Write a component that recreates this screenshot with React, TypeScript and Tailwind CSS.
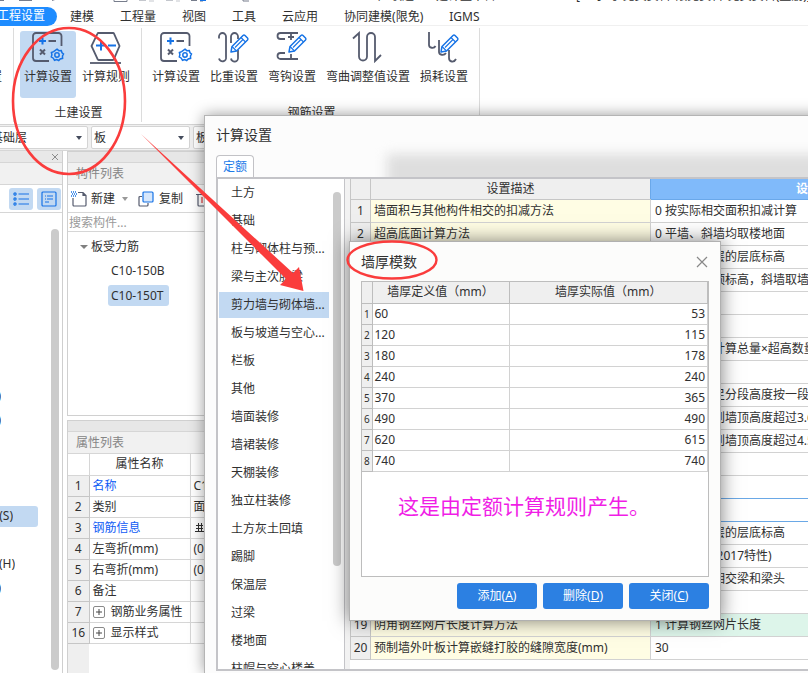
import type { ReactNode } from "react";

const INK = "#555b6e";
const BLUE = "#1673e6";

function Icon({ children }: { children: ReactNode }) {
  return (
    <svg width="34" height="34" viewBox="0 0 34 34" fill="none" stroke={INK} strokeWidth="1.8" aria-hidden="true">
      {children}
    </svg>
  );
}

function Pencil() {
  return (
    <g stroke={BLUE} strokeWidth="1.5" strokeLinejoin="round" fill="#fff">
      <path d="M14 21l1-5.500L26 4.500a1.500 1.500 0 0 1 2 0l2.500 2.500a1.500 1.500 0 0 1 0 2L19.500 20z" />
      <path d="M24 6.500l4.500 4.500M15 15.500l4.500 4.500M18 16.500l8-8" fill="none" strokeWidth="1.100" />
    </g>
  );
}

function CalcSettingIcon() {
  return (
    <Icon>
      <path d="M30.500 15V5a3 3 0 0 0-3-3H5a3 3 0 0 0-3 3v22a3 3 0 0 0 3 3h13" />
      <path d="M8 10h7M11.500 6.500v7" stroke={BLUE} strokeWidth="2" />
      <path d="M17.500 10H25M9 18.500l5 5M14 18.500l-5 5" strokeWidth="2" />
      <g stroke={BLUE} strokeWidth="1.500">
        <path d="M26 18.200l1.800 1.500 2.500-.2.700 2.300 1.500 1.200-1 2 .1 2.300-2.400.6-1.500 1.600-2-.9-2.200.7-1.200-2.100-2-1.200.6-2.200-.5-2.300 2.200-.9z" />
        <circle cx="26" cy="24" r="2.200" />
      </g>
    </Icon>
  );
}

function CalcRuleIcon() {
  return (
    <Icon>
      <path d="M9.500 2h14.500a1 1 0 0 1 1 .6L30.500 15l-5.700 13.300a1 1 0 0 1-1 .7H9.700a1 1 0 0 1-1-.7L2.500 15 8.500 2.600a1 1 0 0 1 1-.6z" />
      <path d="M7 14.500h10M12 9.500v10M19 14.500h8" stroke={BLUE} strokeWidth="2" />
      <path d="M1 32h31" />
    </Icon>
  );
}

function WeightIcon() {
  return (
    <Icon>
      <path d="M2 7.500V5.500a3.500 3.500 0 0 1 7 0V26a3.500 3.500 0 0 1-7 1.500M14 12V5.500a3.500 3.500 0 0 1 7 0V8M21 19v7.500a3.500 3.500 0 0 1-7 1" />
      <Pencil />
    </Icon>
  );
}

function HookIcon() {
  return (
    <Icon>
      <path d="M23 2H5.500a3 3 0 0 0 0 6H10M10 22H5.500a3 3 0 0 0 0 6H23M16 2v7M13 6h6M16 28v-5" />
      <Pencil />
    </Icon>
  );
}

function BendIcon() {
  return (
    <Icon>
      <path d="M2 7.500L8 2v23.500a4 4 0 0 0 8 0V6a4 4 0 0 1 8 0v24l6-6" />
    </Icon>
  );
}

function LossIcon() {
  return (
    <Icon>
      <path d="M2 1v13c0 3 5 4 6.500 1M12 9v12c0 3 5 4 7 1M22 19v8c0 4 5 5 7 1" />
      <Pencil />
    </Icon>
  );
}

function RibbonButton({ label, icon, active = false }: { label: string; icon: ReactNode; active?: boolean }) {
  return (
    <button className={`flex h-[67px] shrink-0 flex-col items-center rounded-[3px] px-1 ${active ? "bg-[#c2d9f2]" : ""}`}>
      {icon}
      <span className="mt-[3px] leading-[18px] whitespace-nowrap">{label}</span>
    </button>
  );
}

function RibbonGroup({ title, children }: { title: string; children: ReactNode }) {
  return (
    <section className="my-[2px] flex shrink-0 flex-col border-r border-[#dcdcdc] pt-[3px] pr-[7px] pl-[6px]">
      <div className="flex gap-[2px]">{children}</div>
      <h2 className="mt-[6px] pl-[3px] text-center leading-[18px]">{title}</h2>
    </section>
  );
}

function Combo({ label, value, className }: { label: string; value: string; className: string }) {
  return (
    <div className={`relative h-[23px] shrink-0 rounded-[2px] border border-[#d4d4d4] bg-white ${className}`}>
      <select aria-label={label} className="h-full w-full appearance-none bg-transparent pl-[2px] outline-none">
        <option>{value}</option>
      </select>
      <span className="pointer-events-none absolute top-[9px] right-[5px] border-x-[3px] border-t-[4px] border-x-transparent border-t-[#444b5c]" />
    </div>
  );
}

const tabs = ["建模", "工程量", "视图", "工具", "云应用", "协同建模(限免)", "IGMS"];

const properties = [
  { no: 1, name: "名称", value: "C10-150T", link: true },
  { no: 2, name: "类别", value: "面筋" },
  { no: 3, name: "钢筋信息", value: "C10@150", link: true, rebar: true },
  { no: 4, name: "左弯折(mm)", value: "(0)" },
  { no: 5, name: "右弯折(mm)", value: "(0)" },
  { no: 6, name: "备注", value: "" },
  { no: 7, name: "钢筋业务属性", value: "", group: true },
  { no: 16, name: "显示样式", value: "", group: true },
];

const categories = [
  "土方", "基础", "柱与砌体柱与预...", "梁与主次肋梁", "剪力墙与砌体墙...", "板与坡道与空心...", "栏板", "其他", "墙面装修",
  "墙裙装修", "天棚装修", "独立柱装修", "土方灰土回填", "踢脚", "保温层", "过梁", "楼地面", "柱帽与空心楼盖",
];

const settings: [string, string][] = [
  ["墙面积与其他构件相交的扣减方法", "0 按实际相交面积扣减计算"],
  ["超高底面计算方法", "0 平墙、斜墙均取楼地面"],
  ["", "0 墙底所在层的层底标高"],
  ["", "0 平墙取层顶标高，斜墙取墙顶标高"],
  ["", ""],
  ["", ""],
  ["", "0 超高部分计算总量×超高数量"],
  ["", ""],
  ["", "0 超高段不足分段高度按一段计算"],
  ["", "0 从楼地面到墙顶高度超过3.6m"],
  ["", "0 从楼地面到墙顶高度超过4.5m"],
  ["", ""],
  ["", ""],
  ["", ""],
  ["", "0 墙底所在层的层底标高"],
  ["", "0 新版计算(2017特性)"],
  ["", "0 算至两端相交梁和梁头"],
  ["", ""],
  ["阴角钢丝网片长度计算方法", "1 计算钢丝网片长度"],
  ["预制墙外叶板计算嵌缝打胶的缝隙宽度(mm)", "30"],
];

const thickness = [
  [60, 53], [120, 115], [180, 178], [240, 240], [370, 365], [490, 490], [620, 615], [740, 740],
];

function TitleStrip() {
  return (
    <header className="relative h-[7px] shrink-0 overflow-hidden">
      <svg className="absolute top-0 left-0" width="270" height="3" fill="none" stroke="#777d8c" aria-hidden="true">
        <path d="M0 .5h4M19 .5h13M52 .5l3-1M114 0v1.500h13V0M191 .5h6M200 1h3M243 0v1h6" />
        <path d="M139 .5h7M149 1h5M166 .5h7M176 1h4" stroke="#c4c7cd" />
        <path d="M200 .5h6" stroke={BLUE} />
      </svg>
      <span className="absolute bottom-[2px] left-[378px] leading-[18px] whitespace-nowrap">广联达 - 土建计量平台</span>
      <span className="absolute bottom-[2px] left-[576px] leading-[18px] whitespace-nowrap">[E:\学习\免费资料\限免资料\免费资料(量筋)]</span>
    </header>
  );
}

function Ribbon() {
  return (
    <div className="flex h-[99px] shrink-0 overflow-hidden border-b border-[#d4d4d4]">
      <section className="my-[2px] flex w-[14px] shrink-0 justify-end overflow-hidden border-r border-[#dcdcdc] pr-[11px]">
        <span className="pt-[40px] leading-[18px] whitespace-nowrap">楼层设置</span>
      </section>
      <RibbonGroup title="土建设置">
        <RibbonButton active label="计算设置" icon={<CalcSettingIcon />} />
        <RibbonButton label="计算规则" icon={<CalcRuleIcon />} />
      </RibbonGroup>
      <RibbonGroup title="钢筋设置">
        <RibbonButton label="计算设置" icon={<CalcSettingIcon />} />
        <RibbonButton label="比重设置" icon={<WeightIcon />} />
        <RibbonButton label="弯钩设置" icon={<HookIcon />} />
        <RibbonButton label="弯曲调整值设置" icon={<BendIcon />} />
        <RibbonButton label="损耗设置" icon={<LossIcon />} />
      </RibbonGroup>
    </div>
  );
}

function NavTreePanel() {
  const rows = ["梁(L)", "板(B)", "", "", "", "板受力筋(S)", "", "板负筋(H)", "板洞(N)"];
  const widths = ["w-[1px]", "w-[1px]", "w-0", "w-0", "w-0", "w-[13px]", "w-0", "w-[15px]", "w-[1px]"];
  return (
    <aside className="flex w-[63px] shrink-0 flex-col border-r border-[#cfcfcf]">
      <div className="flex h-[12px] items-center justify-end border-b border-[#d6d6d6] bg-[#e8e8e8] pr-[3px]">
        <button aria-label="关闭" className="h-[8px] w-[8px]">
          <svg className="block" width="8" height="8" stroke="#8c8c8c" aria-hidden="true"><path d="M1 1l6 6M7 1l-6 6" /></svg>
        </button>
      </div>
      <div className="h-[22px] border-b border-[#d6d6d6] bg-[#f1f1f1]" />
      <div className="flex h-[28px] items-center gap-1 border-b border-[#d6d6d6] pl-[9px]">
        <button aria-label="列表" className="flex h-[22px] w-6 items-center justify-center rounded-[3px] bg-[#c2d9f2]">
          <svg width="16" height="14" fill="none" stroke={BLUE} strokeWidth="1.200" aria-hidden="true">
            <path d="M5.500 2H16M5.500 7H16M5.500 12H16" />
            <circle cx="2" cy="2" r="1.100" /><circle cx="2" cy="7" r="1.100" /><circle cx="2" cy="12" r="1.100" />
          </svg>
        </button>
        <button aria-label="详情" className="flex h-[22px] w-6 items-center justify-center rounded-[3px] bg-[#c2d9f2]">
          <svg width="16" height="16" fill="none" stroke={BLUE} strokeWidth="1.200" aria-hidden="true">
            <rect x="1" y="1" width="14" height="14" rx="1" />
            <path d="M4 5h1M6 5h6M4 8h1M6 8h6M4 11h4" />
          </svg>
        </button>
      </div>
      <div className="flex min-h-0 flex-1 justify-between pr-[3px]">
        <ul className="w-[38px] pt-[171px]">
          {rows.map((r, i) => (
            <li key={i} className="flex h-6 items-center">
              <div className={`flex h-[21px] w-[38px] items-center overflow-hidden rounded-r-[3px] ${i === 5 ? "bg-[#c2d9f2]" : ""}`}>
                <span className={`flex shrink-0 justify-end overflow-hidden whitespace-nowrap ${widths[i]}`}>{r}</span>
              </div>
            </li>
          ))}
        </ul>
        <div className="mt-4 mb-[3px] w-2 rounded-full bg-[#cbcbcb]" />
      </div>
    </aside>
  );
}

function ComponentPanel() {
  return (
    <section className="flex h-[265px] shrink-0 flex-col border border-[#d0d0d0]">
      <div className="h-[11px] shrink-0 border-b border-[#d6d6d6] bg-[#e7e7e7]" />
      <h2 className="h-[22px] shrink-0 border-b border-[#d6d6d6] bg-[#f1f1f1] pl-2 leading-[22px] text-[#858585]">构件列表</h2>
      <div className="flex h-[28px] shrink-0 items-center border-b border-[#d6d6d6] pl-[3px]">
        <button className="flex items-center gap-[4px]">
          <svg width="16" height="16" fill="none" stroke={INK} strokeWidth="1.200" aria-hidden="true">
            <path d="M7 1.500h5l3 3V14a1 1 0 0 1-1 1H3a1 1 0 0 1-1-1V7M12 1.500V4.500h3" />
            <path d="M0 1h5M1 3h5M0 5h5" stroke={BLUE} strokeDasharray="1 1" strokeWidth="1.500" />
          </svg>
          新建
        </button>
        <span className="ml-[7px] border-x-[3px] border-t-[4px] border-x-transparent border-t-[#999]" />
        <button className="ml-[10px] flex items-center gap-[5px]">
          <svg width="16" height="16" fill="none" strokeWidth="1.200" aria-hidden="true">
            <path d="M4 5.500H2a1 1 0 0 0-1 1V14a1 1 0 0 0 1 1h7a1 1 0 0 0 1-1v-2" stroke={INK} />
            <rect x="5" y="1" width="10" height="10" rx="1" fill="#d7e7fb" stroke={BLUE} />
          </svg>
          复制
        </button>
        <button aria-label="删除" className="ml-[13px]">
          <svg width="16" height="16" fill="none" stroke={INK} strokeWidth="1.200" aria-hidden="true">
            <path d="M0 3.500h16M2 3.500V14a1 1 0 0 0 1 1h10" /><path d="M6 6v6M10 6v6" stroke="#e03b3b" />
          </svg>
        </button>
      </div>
      <input aria-label="搜索构件" placeholder="搜索构件..." className="h-[19px] shrink-0 border-b border-[#d6d6d6] pl-[1px] outline-none placeholder:text-[#9a9a9a]" />
      <ul className="pt-[3px] leading-6">
        <li>
          <div className="flex items-center gap-[3px] pl-[12px]">
            <span className="border-x-[4px] border-t-[4px] border-x-transparent border-t-[#808080]" />
            板受力筋
          </div>
          <ul className="pl-10">
            <li className="px-[3px]">C10-150B</li>
            <li className="flex h-6 items-center">
              <span className="rounded-[3px] bg-[#c2d9f2] pr-[6px] pl-[3px] leading-[21px]">C10-150T</span>
            </li>
          </ul>
        </li>
      </ul>
    </section>
  );
}

function PropertyPanel() {
  return (
    <section className="mt-[4px] flex min-h-0 flex-1 flex-col border border-b-0 border-[#d0d0d0]">
      <div className="h-[11px] shrink-0 border-b border-[#d6d6d6] bg-[#e7e7e7]" />
      <h2 className="h-[22px] shrink-0 border-b border-[#d6d6d6] bg-[#f1f1f1] pl-2 leading-[21px] text-[#858585]">属性列表</h2>
      <table className="w-[240px] table-fixed border-collapse">
        <colgroup><col className="w-[21px]" /><col className="w-[101px]" /><col /></colgroup>
        <thead>
          <tr className="h-[21px] border-b border-[#d6d6d6]">
            <th className="border-r border-[#d6d6d6]" />
            <th className="border-r border-[#d6d6d6] font-normal">属性名称</th>
            <th className="font-normal">属性值</th>
          </tr>
        </thead>
        <tbody>
          {properties.map((p) => (
            <tr key={p.no} className="h-[21px] border-b border-[#d6d6d6]">
              <td className="border-r border-b border-[#c6c6c6] bg-[#efefef] text-center">{p.no}</td>
              <td className={`border-r border-[#d6d6d6] pl-[3px] whitespace-nowrap ${p.link ? "text-[#0f5cf5]" : ""}`}>
                {p.group ? (
                  <span className="flex items-center gap-[6px]">
                    <button aria-label="展开" className="flex h-[12px] w-[12px] items-center justify-center rounded-[2px] border border-[#8a8a8a]">
                      <svg width="6" height="6" stroke="#444" aria-hidden="true"><path d="M0 3h6M3 0v6" /></svg>
                    </button>
                    {p.name}
                  </span>
                ) : (
                  p.name
                )}
              </td>
              <td className="pl-[3px] whitespace-nowrap">
                {p.rebar ? (
                  <span className="flex items-center gap-1">
                    <svg width="10" height="10" fill="none" stroke="#303030" aria-hidden="true">
                      <path d="M2 2.500h7M2 5.500h7M1 8.500h9M4.500 0v8M7.500 0v8" />
                    </svg>
                    {p.value}
                  </span>
                ) : (
                  p.value
                )}
              </td>
            </tr>
          ))}
        </tbody>
      </table>
      <div className="w-[21px] flex-1 bg-[#efefef]" />
    </section>
  );
}

function SettingsDialog() {
  return (
    <div role="dialog" aria-label="计算设置" className="absolute top-[115px] bottom-0 left-[204px] flex w-[800px] flex-col overflow-hidden border-t border-l border-[#b4b4b4] bg-[#fcfcfc] px-[11px] pb-[2px] shadow-[0_0_14px_rgba(0,0,0,0.4)]">
      <div className="pointer-events-none absolute top-[38px] right-0 left-[182px] h-16 bg-[#dedede] blur-[6px]" />
      <h1 className="relative h-[39px] shrink-0 text-[14px] leading-[38px]">计算设置</h1>
      <div className="relative flex h-[22px] shrink-0">
        <button className="w-[38px] rounded-t-[4px] border border-b-0 border-[#c2c2c6] bg-white text-[#1e7be8]">定额</button>
      </div>
      <div className="relative flex min-h-0 flex-1 border-y-2 border-l-2 border-[#c4c4c8] bg-white">
        <div className="flex w-[127px] shrink-0 overflow-hidden border-r border-[#c4c4c8]">
          <ul className="w-[115px] shrink-0 pt-px pl-px">
            {categories.map((c, i) => (
              <li key={c} className={`mb-[2px] h-[26px] w-[110px] pl-3 leading-[26px] whitespace-nowrap ${i === 4 ? "bg-[#c2d9f2]" : ""}`}>{c}</li>
            ))}
          </ul>
          <div className="mt-[13px] h-[374px] w-2 rounded-full bg-[#cbcbcb]" />
        </div>
        <div className="w-[5px] shrink-0 bg-[#f2f2f2]" />
        <table className="h-[480px] w-[639px] table-fixed self-start border-collapse">
          <colgroup><col className="w-[20px]" /><col className="w-[280px]" /><col className="w-[339px]" /></colgroup>
          <thead>
            <tr className="h-[20px] bg-[#efefef]">
              <th className="border-x border-b border-[#c6c6c6]" />
              <th className="border-b border-[#c6c6c6] font-normal">设置描述</th>
              <th className="border border-t-0 border-[#6aa8ea] bg-[#80bafa] font-bold text-white">设置选项</th>
            </tr>
          </thead>
          <tbody>
            {settings.map(([desc, value], i) => (
              <tr key={i} className={`h-[23px] border-b ${i === 12 || i === 13 ? "border-[#6aa8e6]" : "border-[#d2d2d2]"}`}>
                <td className="border-x border-b border-[#c6c6c6] bg-[#efefef] text-center">{i + 1}</td>
                <td className="border-r border-[#d2d2d2] bg-[#fffde4] pl-[3px] whitespace-nowrap">{desc}</td>
                <td className={`pl-[4px] whitespace-nowrap ${i === 18 ? "bg-[#ddf5ea]" : ""}`}>{value}</td>
              </tr>
            ))}
          </tbody>
        </table>
      </div>
    </div>
  );
}

function ThicknessDialog() {
  const actions = [["添加", "A"], ["删除", "D"], ["关闭", "C"]];
  return (
    <div role="dialog" aria-label="墙厚模数" className="absolute top-[241px] left-[349px] flex h-[380px] w-[372px] flex-col border border-[#b0b0b0] bg-[#fcfcfb] px-[11px] pb-[11px] shadow-[0_0_18px_rgba(0,0,0,0.5)]">
      <div className="flex h-[39px] items-center justify-between">
        <h1 className="text-[14px]">墙厚模数</h1>
        <button aria-label="关闭">
          <svg width="14" height="14" stroke="#888" strokeWidth="1.200" aria-hidden="true"><path d="M2 2l10 10M12 2L2 12" /></svg>
        </button>
      </div>
      <div className="min-h-0 flex-1 border border-[#bdbdbd] bg-white">
        <table className="w-full table-fixed border-collapse">
          <colgroup><col className="w-[10px]" /><col className="w-[137px]" /><col /></colgroup>
          <thead>
            <tr className="h-[21px] bg-[#efefef]">
              <th className="border-r border-b border-[#bdbdbd]" />
              <th className="border-r border-b border-[#bdbdbd] font-normal">墙厚定义值（mm）</th>
              <th className="border-r border-b border-[#bdbdbd] font-normal">墙厚实际值（mm）</th>
            </tr>
          </thead>
          <tbody>
            {thickness.map(([def, real], i) => (
              <tr key={def} className="h-[21px]">
                <td className="border-r border-b border-[#bdbdbd] bg-[#efefef] text-center text-[10px]">{i + 1}</td>
                <td className="border-r border-b border-[#d2d2d2] pl-[2px]">{def}</td>
                <td className="border-r border-b border-[#d2d2d2] pr-[2px] text-right">{real}</td>
              </tr>
            ))}
          </tbody>
        </table>
        <p className="mt-[18px] pl-9 text-[21px] leading-[32px] whitespace-nowrap text-[#f01ee6]">这是由定额计算规则产生。</p>
      </div>
      <div className="mt-[6px] flex h-[26px] shrink-0 justify-end gap-[6px]">
        {actions.map(([label, key]) => (
          <button key={key} className="w-20 rounded-[3px] bg-[#2c80e2] text-white">
            {label}(<u>{key}</u>)
          </button>
        ))}
      </div>
    </div>
  );
}

function Annotations() {
  return (
    <svg className="pointer-events-none absolute top-0 left-0" width="450" height="310" fill="none" stroke="#fa3c3c" aria-hidden="true">
      <ellipse cx="69" cy="101" rx="56" ry="73" strokeWidth="2.600" />
      <ellipse cx="392" cy="260" rx="44.500" ry="18.500" strokeWidth="2.400" />
      <path d="M141 134L293 273 299 267 303.500 291 280 285 286 279z" fill="#fa3c3c" stroke="none" />
    </svg>
  );
}

export default function App() {
  return (
    <div className="relative flex h-screen flex-col overflow-hidden bg-white font-['Noto_Sans','Noto_Sans_CJK_SC',sans-serif] text-[12px] leading-[18px] text-[#303030]">
      <TitleStrip />
      <nav className="-ml-[14px] flex h-[19px] shrink-0 items-center border-b border-[#f0f0f0]">
        <button className="h-[19px] rounded-full bg-[#1e8cff] pr-3 pl-[11px] text-white">工程设置</button>
        {tabs.map((t) => (
          <button key={t} className="px-[13px] pt-px whitespace-nowrap">{t}</button>
        ))}
      </nav>
      <Ribbon />
      <div className="flex h-[26px] shrink-0 items-center gap-[3px] overflow-hidden border-b border-[#d6d6d6] bg-[#f0f0f0]">
        <Combo label="楼层" value="基础层" className="-ml-3 w-[100px]" />
        <Combo label="构件类型" value="板" className="w-[99px]" />
        <Combo label="构件" value="板受力筋" className="w-[120px]" />
      </div>
      <main className="flex min-h-0 flex-1">
        <NavTreePanel />
        <div className="ml-[4px] flex min-w-0 flex-1 flex-col overflow-hidden">
          <ComponentPanel />
          <PropertyPanel />
        </div>
      </main>
      <SettingsDialog />
      <ThicknessDialog />
      <Annotations />
    </div>
  );
}
